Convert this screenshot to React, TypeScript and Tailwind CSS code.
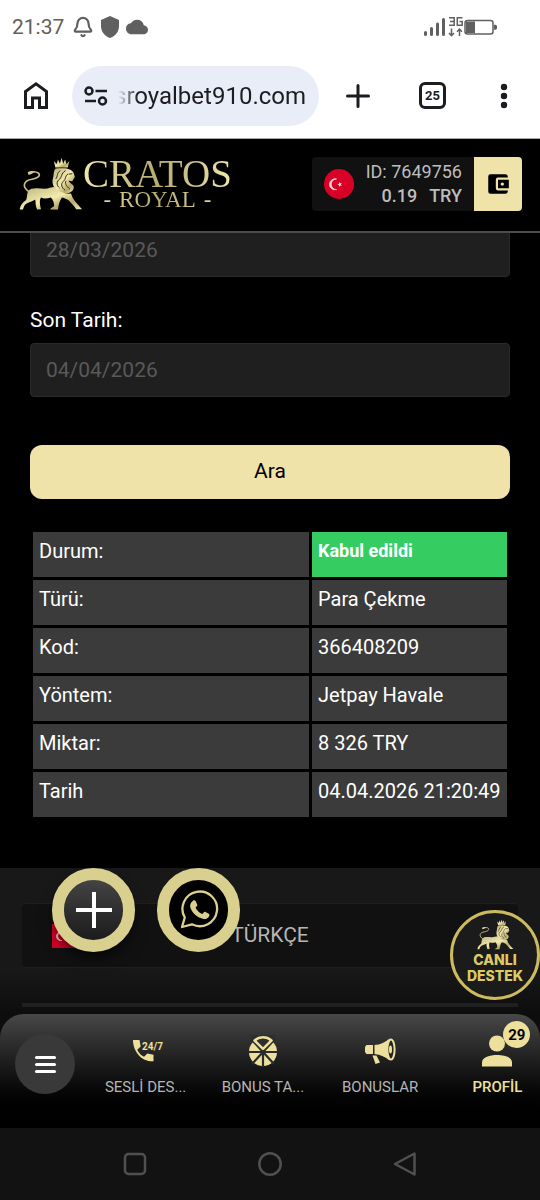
import { Bell } from "lucide-react";
import { useState } from "react";
import { MdAccountBalanceWallet, MdCloud, MdShield } from "react-icons/md";

const transaction = [
  { label: "Durum:", value: "Kabul edildi", accepted: true },
  { label: "Türü:", value: "Para Çekme" },
  { label: "Kod:", value: "366408209" },
  { label: "Yöntem:", value: "Jetpay Havale" },
  { label: "Miktar:", value: "8 326 TRY" },
  { label: "Tarih", value: "04.04.2026 21:20:49" },
];

function Lion({ className }: { className: string }) {
  return (
    <svg viewBox="0 0 197 165" className={className} aria-hidden="true">
      <defs>
        <linearGradient id="lion-gold" x1="0" y1="0" x2="1" y2="1">
          <stop offset="0" stopColor="#b9b078" />
          <stop offset="0.5" stopColor="#f3eaaf" />
          <stop offset="0.75" stopColor="#b5a86a" />
          <stop offset="1" stopColor="#f4edbd" />
        </linearGradient>
      </defs>
      <g fill="url(#lion-gold)">
        <path d="M107 12l9 9 4-14 6 13 5-18 5 18 6-13 4 14 9-9-5 20h-38z" />
        <path d="M113 35c-8 9-5 18-8 28-5 15 1 30 12 41 12 7 24 9 36 6 10-2 17-10 15-21-6-9-15-11-15-17 7 4 13 3 14-3l5-8-4-13c-7-12-20-17-55-13z" />
        <path d="M28 105c8-13 32-9 47-8 15 1 25-5 33-5 10 14 36 22 52 20l5 13c10 15 20 25 29 35h-18c-6-10-16-18-24-28-7-4-14-7-20-8-6 8-10 21-12 37H96c2-7 10-7 12-11 0-10-3-20-10-26-13 4-23 4-30 0-6 8-4 21 0 36l-12 1c-6-11-4-21-6-31-10 8-28 8-34 20l-4 11H2c2-11 8-21 20-29 4-10 2-20 6-27z" />
        <path d="M27 46c8-5 18-5 22 0-7 1-11 8-20 8z" />
      </g>
      <path
        d="M30 106C8 90 14 72 40 68c18-3 26-11 21-18-6-6-18-6-27-1"
        fill="none"
        stroke="#c9c08a"
        strokeWidth="5"
        strokeLinecap="round"
      />
      <g fill="none" stroke="#2d2813" strokeWidth="3" strokeLinecap="round">
        <path d="M142 42c-14 8-8 20-20 28-8 8-5 18 2 24" />
        <path d="M150 52c-10 6-4 16-14 23-9 9-4 19 5 26" />
        <path d="M144 74c-4 10 4 16 12 24" />
        <path d="M126 42c-10 6-6 16-12 24" />
        <path d="M154 52l9-1" />
      </g>
    </svg>
  );
}

function CrescentFlag({ className }: { className: string }) {
  return (
    <svg viewBox="0 0 30 30" preserveAspectRatio="xMinYMid slice" className={className} aria-hidden="true">
      <rect width="30" height="30" fill="#d80027" />
      <path
        d="M12.500 10a5.500 5.500 0 1 0 0 10.600 4.700 4.700 0 1 1 0-10.600z"
        fill="#f7d9dd"
        stroke="#f7d9dd"
        strokeWidth="0.800"
      />
      <path
        d="M15 12.800l1.100 1.500 1.800-.5-1.100 1.600 1.100 1.600-1.800-.6-1.100 1.500v-1.900l-1.800-.6 1.800-.6z"
        fill="#f7d9dd"
      />
    </svg>
  );
}

function StatusBar() {
  return (
    <div className="flex h-[54px] items-center justify-between bg-white pr-[42px] pl-3 text-[#606060]">
      <div className="flex items-center">
        <span className="text-[21px] leading-7">21:37</span>
        <Bell className="ml-2 h-[22px] w-[22px]" strokeWidth={2.4} />
        <MdShield className="ml-1 h-6 w-6" />
        <MdCloud className="ml-1 h-[22px] w-[22px]" />
      </div>
      <svg width="75" height="22" viewBox="0 0 75 22" aria-hidden="true">
        <g stroke="#606060" strokeWidth="3" strokeLinecap="round">
          <path d="M2.500 16.500v2M8.500 12.500v6M14.500 8v10.500M20.500 3.500v15" />
        </g>
        <g fill="none" stroke="#606060" strokeWidth="1.500">
          <path d="M26 1.800h5.200v7.400H26M27 5.500h4M39.500 1.800h-5.200v7.400h4.900V5.500H36.500" />
          <path d="M28.500 12.500v7M26 17l2.500 2.700L31 17M36.500 20v-7M34 15.700l2.500-2.700 2.500 2.700" />
          <rect x="42" y="4.500" width="28" height="13.500" rx="2.500" />
        </g>
        <path d="M43 5.500h9v11.500h-9zM71 8.800h1.500l1.500 1v3l-1.500 1H71z" fill="#606060" />
      </svg>
    </div>
  );
}

function BrowserBar() {
  const [address, setAddress] = useState("sroyalbet910.com");

  return (
    <div className="flex h-[85px] items-center border-b border-[#a9a9b0] bg-white pr-[31px] pb-px pl-6 text-[#1c1d21]">
      <button type="button" aria-label="Ana sayfa">
        <svg width="24" height="27" viewBox="0 0 24 27" fill="none" stroke="currentColor" strokeWidth="3">
          <path d="M1.500 25.500V9.500L12 1.900l10.500 7.600v16h-7V16h-7v9.500z" />
        </svg>
      </button>
      <div className="ml-6 flex h-[60px] min-w-0 flex-1 items-center rounded-full bg-[#e9edf7] pl-3">
        <svg width="24" height="20" viewBox="0 0 24 20" fill="none" stroke="currentColor" strokeWidth="2.500" className="shrink-0">
          <circle cx="5" cy="5" r="3.500" />
          <path d="M11.500 5H23M1 15h11" />
          <circle cx="18.500" cy="15" r="3.500" />
        </svg>
        <input
          aria-label="Adres"
          value={address}
          onChange={(event) => setAddress(event.target.value)}
          className="ml-1.5 w-full min-w-0 bg-transparent text-2xl outline-none [mask-image:linear-gradient(to_right,transparent_4px,black_24px)]"
        />
      </div>
      <button type="button" aria-label="Yeni sekme" className="ml-[27px]">
        <svg width="24" height="24" viewBox="0 0 24 24" stroke="currentColor" strokeWidth="3" strokeLinecap="round">
          <path d="M12 1.500v21M1.500 12h21" />
        </svg>
      </button>
      <button
        type="button"
        aria-label="25 sekme"
        className="ml-[49px] flex h-[27px] w-[27px] items-center justify-center rounded-md border-[3px] border-current text-[13px] font-bold"
      >
        25
      </button>
      <button type="button" aria-label="Menü" className="ml-[53px]">
        <svg width="10" height="26" viewBox="0 0 10 26" fill="currentColor">
          <circle cx="5" cy="4" r="3.200" />
          <circle cx="5" cy="13" r="3.200" />
          <circle cx="5" cy="22" r="3.200" />
        </svg>
      </button>
    </div>
  );
}

function SiteHeader() {
  return (
    <header className="relative z-10 flex h-[94px] items-center justify-between border-b-2 border-[#4b4b4b] bg-black pr-[18px] pb-0.5 pl-[19px]">
      <a href="#" aria-label="Cratos Royal" className="flex items-center">
        <Lion className="h-[54px] w-16 shrink-0" />
        <span className="flex flex-col items-center bg-linear-to-r from-[#f0e8ac] via-[#b5ab70] to-[#efe7ad] bg-clip-text font-['Liberation_Serif',serif] text-transparent">
          <span className="text-[39px] leading-8">CRATOS</span>
          <span className="flex gap-2 text-[23px] leading-5">
            <span>-</span>
            <span>ROYAL</span>
            <span>-</span>
          </span>
        </span>
      </a>
      <div className="flex h-[54px] overflow-hidden rounded-sm">
        <div className="flex items-center gap-3 bg-[#111] pr-3 pl-3 text-[#bdbdbd]">
          <CrescentFlag className="h-[30px] w-[30px] rounded-full" />
          <div className="text-right text-lg leading-6">
            <div>ID: 7649756</div>
            <div className="flex justify-end gap-3 font-medium">
              <span>0.19</span>
              <span>TRY</span>
            </div>
          </div>
        </div>
        <button
          type="button"
          aria-label="Cüzdan"
          className="flex w-12 items-center justify-center bg-[#efe3aa] text-black"
        >
          <MdAccountBalanceWallet className="h-[26px] w-[26px]" />
        </button>
      </div>
    </header>
  );
}

function History() {
  return (
    <main className="-mt-2.5 flex flex-col px-[30px] pb-12 text-white">
      <input
        aria-label="Başlangıç Tarihi"
        value="28/03/2026"
        readOnly
        className="h-[54px] w-full rounded-sm border border-[#2a2a2a] bg-[#1f1f1f] px-[15px] text-[21px] text-[#595959] outline-none"
      />
      <label htmlFor="end-date" className="mt-[31px] mb-[11px] text-[21px] leading-6">
        Son Tarih:
      </label>
      <input
        id="end-date"
        value="04/04/2026"
        readOnly
        className="h-[54px] w-full rounded-sm border border-[#2a2a2a] bg-[#1f1f1f] px-[15px] text-[21px] text-[#595959] outline-none"
      />
      <button
        type="button"
        className="mt-12 h-[54px] w-full rounded-xl bg-[#efe3aa] text-[21px] text-black"
      >
        Ara
      </button>

      <table className="mt-[30px] w-full border-separate border-spacing-[3px] text-left text-xl leading-6">
        <tbody>
          {transaction.map((row) => (
            <tr key={row.label}>
              <th
                scope="row"
                className="h-[45px] bg-[#3b3b3b] px-1.5 pt-[7px] align-top leading-6 font-normal"
              >
                {row.label}
              </th>
              <td
                className={
                  row.accepted
                    ? "h-[45px] w-[195px] bg-[#35cd62] px-1.5 pt-[7px] align-top text-lg leading-6 font-bold"
                    : "h-[45px] w-[195px] bg-[#3b3b3b] px-1.5 pt-[7px] align-top leading-6"
                }
              >
                {row.value}
              </td>
            </tr>
          ))}
        </tbody>
      </table>
    </main>
  );
}

function LanguageFooter() {
  return (
    <footer className="relative bg-linear-to-b from-[#181818] from-70% to-[#0d0d0d] px-[22px] pt-[35px] pb-[7px]">
      <button
        type="button"
        className="relative flex h-[65px] w-full items-center justify-center rounded-sm border-y border-[#1f1f1f] bg-[#111] text-[21px] text-[#b5b5b5]"
      >
        <CrescentFlag className="absolute left-[30px] h-6 w-6" />
        TÜRKÇE
      </button>
      <div className="mt-[35px] h-1 bg-[#202020]" />

      <div className="absolute top-0 left-[52px] flex gap-[22px]">
        <button
          type="button"
          aria-label="Daha fazla"
          className="flex h-[84px] w-[83px] items-center justify-center rounded-full border-12 border-[#d9cf8e] bg-linear-to-b from-[#444] to-[#1c1c1c] shadow-lg shadow-black/50"
        >
          <svg width="36" height="36" viewBox="0 0 36 36" stroke="#fff" strokeWidth="4" className="shrink-0">
            <path d="M18 0v36M0 18h36" />
          </svg>
        </button>
        <a
          href="#"
          aria-label="WhatsApp"
          className="flex h-[84px] w-[83px] items-center justify-center rounded-full border-12 border-[#d9cf8e] bg-black text-[#d9cf8e]"
        >
          <svg width="40" height="40" viewBox="0 0 40 40" className="shrink-0">
            <path
              d="M3 37l2.800-9.500A17.300 17.300 0 1 1 13 34.300z"
              fill="none"
              stroke="currentColor"
              strokeWidth="2.300"
              strokeLinejoin="round"
            />
            <path
              d="M14.200 10.500c.9-.6 1.900-.4 2.400.6l1.700 3.700c.4.900-1.300 2.200-1.700 2.900 1.500 3 3.600 5 6.700 6.400.8-.6 1.800-2.600 2.700-2.300l3.800 1.900c.8.500.8 1.500.3 2.500-1.100 2.300-3.600 3.300-6.300 2.600-6-1.500-10.400-5.500-12.400-11-.9-2.800.3-5.700 2.800-7.300z"
              fill="currentColor"
            />
          </svg>
        </a>
      </div>

      <a
        href="#"
        className="absolute top-[42px] right-0 flex h-[90px] w-[90px] flex-col items-center rounded-full border-3 border-[#cdbc5f] bg-[#1b1b1b] pt-1.5 text-[#dccb65]"
      >
        <Lion className="h-[31px] w-[37px]" />
        <span className="mt-0.5 text-center font-[Inter,sans-serif] text-[14px] leading-4 font-extrabold">
          CANLI
          <br />
          DESTEK
        </span>
      </a>
    </footer>
  );
}

function PhoneIcon() {
  return (
    <svg width="36" height="32" viewBox="0 0 36 32" fill="#ece09c" aria-hidden="true">
      <path d="M5 5h6.500l1.200 6.500-3.500 3.300c1.800 3.500 3.700 5.300 6.800 6.900l3.400-3.100 6.100 1.200v6.500C14 27 5 17 5 5z" />
      <text x="14" y="15" fontFamily="Roboto, sans-serif" fontSize="10" fontWeight="700">
        24/7
      </text>
    </svg>
  );
}

function WheelIcon() {
  return (
    <svg width="32" height="32" viewBox="0 0 32 32" aria-hidden="true">
      <circle cx="16" cy="17" r="14" fill="#ece09c" />
      <path d="M16 16.500L2-1h28z" fill="#2e2e2e" />
      <path
        d="M16 17v15M16 17H1M16 17h15M16 17L4 4M16 17L28 4M16 17L5 29M16 17l11 12"
        stroke="#2b2b2b"
        strokeWidth="2.200"
      />
      <path
        d="M7.500 5.500c5-4.200 12-4.200 17 0L16 13.800z"
        fill="none"
        stroke="#ece09c"
        strokeWidth="2.500"
        strokeLinejoin="round"
      />
    </svg>
  );
}

function MegaphoneIcon() {
  return (
    <svg width="32" height="32" viewBox="0 0 32 32" fill="#ece09c" aria-hidden="true">
      <path d="M2.500 10h6.500v9H2.500L1 17v-5zM10.500 10c6-.2 11-3 15-6.500v22c-4-3.500-9-6-15-6.500z" />
      <path d="M8.500 20.500h4l3.500 7-4.500 1.500z" />
      <ellipse cx="27" cy="14.500" rx="3.600" ry="10" fill="#242424" stroke="#ece09c" strokeWidth="2" />
      <ellipse cx="26.500" cy="14.500" rx="1.500" ry="4" />
    </svg>
  );
}

function ProfileIcon() {
  return (
    <span className="relative block">
      <svg width="32" height="32" viewBox="0 0 32 32" fill="#ece09c" aria-hidden="true">
        <circle cx="16" cy="8.500" r="8" />
        <path d="M1 31.500v-4C1 22 9 20 16 20s15 2 15 7.500v4z" />
      </svg>
      <span className="absolute -top-3.5 left-[22px] flex h-[27px] w-[27px] items-center justify-center rounded-full bg-[#ece09c] text-[15px] font-bold text-black">
        29
      </span>
    </span>
  );
}

const tabs = [
  { label: "SESLİ DES...", icon: <PhoneIcon /> },
  { label: "BONUS TA...", icon: <WheelIcon /> },
  { label: "BONUSLAR", icon: <MegaphoneIcon /> },
  { label: "PROFİL", icon: <ProfileIcon />, active: true },
];

function TabBar() {
  return (
    <div className="bg-[#0d0d0d]">
      <nav className="flex h-[114px] overflow-hidden rounded-t-3xl bg-linear-to-b from-[#484848] to-black pl-[15px]">
        <button
          type="button"
          aria-label="Menü"
          className="mt-5 flex h-[60px] w-[60px] shrink-0 flex-col items-center justify-center gap-1 rounded-full bg-[#393939]"
        >
          <span className="h-[3px] w-[21px] rounded-full bg-white" />
          <span className="h-[3px] w-[21px] rounded-full bg-white" />
          <span className="h-[3px] w-[21px] rounded-full bg-white" />
        </button>
        <div className="-mr-4 ml-3 grid flex-1 grid-cols-4">
          {tabs.map((tab) => (
            <a
              key={tab.label}
              href="#"
              className={
                tab.active
                  ? "flex flex-col items-center gap-2.5 pt-[21px] text-[15px] leading-5 font-medium text-[#ece09c]"
                  : "flex flex-col items-center gap-2.5 pt-[21px] text-[15px] leading-5 text-[#b5b5b5]"
              }
            >
              {tab.icon}
              {tab.label}
            </a>
          ))}
        </div>
      </nav>
    </div>
  );
}

function SystemBar() {
  return (
    <div className="flex h-[72px] items-center justify-center gap-[111px] bg-[#121212]">
      <button type="button" aria-label="Son uygulamalar">
        <svg width="24" height="24" viewBox="0 0 24 24" fill="none" stroke="#505050" strokeWidth="2.500">
          <rect x="2" y="2" width="20" height="20" rx="3.500" />
        </svg>
      </button>
      <button type="button" aria-label="Ana ekran">
        <svg width="24" height="24" viewBox="0 0 24 24" fill="none" stroke="#505050" strokeWidth="2.500">
          <circle cx="12" cy="12" r="10.700" />
        </svg>
      </button>
      <button type="button" aria-label="Geri">
        <svg width="24" height="24" viewBox="0 0 24 24" fill="none" stroke="#505050" strokeWidth="2.500" strokeLinejoin="round">
          <path d="M21.500 1.500v21L2 12z" />
        </svg>
      </button>
    </div>
  );
}

export default function App() {
  return (
    <div className="flex min-h-screen w-full flex-col overflow-hidden bg-black font-[Roboto,sans-serif]">
      <StatusBar />
      <BrowserBar />
      <SiteHeader />
      <History />
      <div className="flex-1 bg-[#0d0d0d]">
        <LanguageFooter />
      </div>
      <TabBar />
      <SystemBar />
    </div>
  );
}
